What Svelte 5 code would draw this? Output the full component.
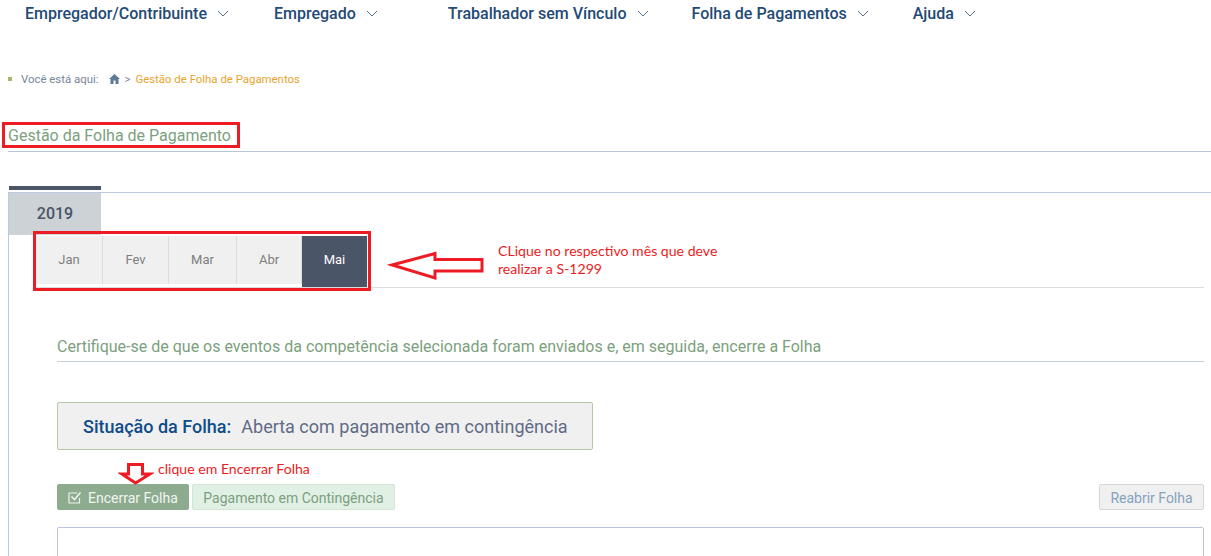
<script>
  const menu = [
    { label: 'Empregador/Contribuinte', gap: 45 },
    { label: 'Empregado', gap: 70 },
    { label: 'Trabalhador sem Vínculo', gap: 43 },
    { label: 'Folha de Pagamentos', gap: 44 },
    { label: 'Ajuda', gap: 0 }
  ];
  const months = ['Jan', 'Fev', 'Mar', 'Abr', 'Mai'];
</script>

<div class="page">
  <nav class="topnav">
    {#each menu as item}
      <a class="nav-item" style="margin-right: {item.gap}px">
        {item.label}
        <svg class="chev" width="12" height="7" viewBox="0 0 12 7"><path d="M1 1l5 5 5-5" fill="none" stroke="#5a6f85" stroke-width="1" /></svg>
      </a>
    {/each}
  </nav>

  <div class="crumbs">
    <span class="bullet"></span>
    <span class="here">Você está aqui:</span>
    <svg class="home" width="11" height="10" viewBox="0 0 11 10"><path d="M5.5 0L0 5h1.5v5h3V6.5h2V10h3V5H11z" fill="#5f7a94" /></svg>
    <span class="sep">&gt;</span>
    <span class="current">Gestão de Folha de Pagamentos</span>
  </div>

  <div class="title-row">
    <h1>Gestão da Folha de Pagamento</h1>
  </div>

  <div class="tab-marker"></div>
  <section class="panel">
    <div class="year">2019</div>
    <div class="months-row">
      <div class="months">
        {#each months as m}
          <button class="month" class:active={m === 'Mai'}>{m}</button>
        {/each}
      </div>
    </div>

    <div class="content">
      <h2>Certifique-se de que os eventos da competência selecionada foram enviados e, em seguida, encerre a Folha</h2>

      <div class="status">
        <strong>Situação da Folha:</strong>
        <span>Aberta com pagamento em contingência</span>
      </div>

      <div class="actions">
        <button class="btn close">
          <svg width="14" height="13" viewBox="0 0 14 13"><path d="M11.500 7v5h-10.500v-10h8.500" fill="none" stroke="#eef3ee" stroke-width="1.2" /><path d="M3.500 5.500l3 3 6-7" fill="none" stroke="#eef3ee" stroke-width="1.6" /></svg>
          Encerrar Folha
        </button>
        <button class="btn contingency">Pagamento em Contingência</button>
        <button class="btn reopen">Reabrir Folha</button>
      </div>

      <div class="box"></div>
    </div>
  </section>

  <!-- anotacoes por cima da tela -->
  <div class="mark month-mark"></div>
  <svg class="arrow left-arrow" width="100" height="32" viewBox="0 0 100 32">
    <path d="M5 15L48 3.500V9.500H95V21H48V28z" fill="#fff" stroke="#ed1c24" stroke-width="3" />
  </svg>
  <p class="note note-month">CLique no respectivo mês que deve<br />realizar a S-1299</p>
  <svg class="arrow down-arrow" width="36" height="23" viewBox="0 0 36 23">
    <path d="M10.500 1.500H24.500V11H32L17.500 20 4 11h6.500z" fill="#fff" stroke="#ed1c24" stroke-width="3" />
  </svg>
  <p class="note note-close">clique em Encerrar Folha</p>
</div>

<style>
  :global(body) {
    margin: 0;
    background: #fff;
    overflow: hidden;
  }

  .page {
    position: relative;
    width: 1211px;
    height: 556px;
    overflow: hidden;
    font-family: Roboto, sans-serif;
  }

  .topnav {
    display: flex;
    align-items: center;
    height: 26px;
    padding-left: 25px;
  }

  .nav-item {
    display: flex;
    align-items: center;
    gap: 10px;
    font-size: 16px;
    font-weight: 500;
    color: #1f4a75;
    white-space: nowrap;
  }

  .chev {
    margin-top: 1px;
  }

  .crumbs {
    display: flex;
    align-items: center;
    height: 14px;
    margin-top: 46px;
    padding-left: 8px;
    font-size: 11.4px;
  }

  .bullet {
    width: 4px;
    height: 4px;
    background: #a3b86c;
    margin-right: 9px;
  }

  .here {
    color: #76869a;
    margin-right: 11px;
  }

  .sep {
    color: #76869a;
    margin: 0 5px 0 4px;
  }

  .current {
    color: #e8a32e;
  }

  .title-row {
    margin-top: 36px;
    margin-left: 8px;
    height: 29px;
    border-bottom: 1px solid #b9c4d8;
  }

  h1 {
    box-sizing: border-box;
    width: 238px;
    height: 26px;
    margin: 0 0 0 -6px;
    padding: 2px 0 0 3px;
    border: 3px solid #ed1c24;
    font-size: 16px;
    line-height: 18px;
    font-weight: 400;
    color: #7c9f7e;
    white-space: nowrap;
  }

  .tab-marker {
    width: 92px;
    height: 4px;
    margin: 34px 0 0 9px;
    background: #4a5568;
  }

  .panel {
    margin: 2px 0 0 8px;
    border-top: 1px solid #b9c9de;
    border-left: 1px solid #b9c9de;
    height: 400px;
  }

  .year {
    width: 92px;
    height: 42px;
    background: #ccd2d5;
    color: #4a5568;
    font-size: 16px;
    font-weight: 500;
    line-height: 42px;
    text-align: center;
  }

  .months-row {
    margin: 1px 7px 0 27px;
    border-bottom: 1px solid #dcdcdc;
  }

  .months {
    display: flex;
    height: 51px;
  }

  .month {
    width: 66px;
    height: 48px;
    padding: 0 0 2px;
    border: 0;
    border-right: 1px solid #dcdcdc;
    background: #f0f0f0;
    color: #7e7e7e;
    font: 400 13px Roboto, sans-serif;
  }

  .month:nth-child(1) {
    width: 67px;
  }

  .month:nth-child(3) {
    width: 68px;
  }

  .month:nth-child(4) {
    width: 65px;
  }

  .month.active {
    width: 65px;
    height: 51px;
    padding-bottom: 5px;
    border: 0;
    background: #4a5568;
    color: #fff;
  }

  .content {
    margin: 0 7px 0 48px;
  }

  h2 {
    margin: 0;
    padding: 49px 0 5px;
    height: 19px;
    line-height: 19px;
    font-size: 16px;
    font-weight: 400;
    color: #7c9f7e;
    border-bottom: 1px solid #c6cfdc;
  }

  .status {
    display: flex;
    align-items: center;
    gap: 10px;
    width: 509px;
    height: 46px;
    margin-top: 40px;
    padding-left: 25px;
    background: #f0f0f0;
    border: 1px solid #b4c8a8;
    border-radius: 2px;
    font-size: 18px;
  }

  .status strong {
    color: #0f4c8a;
    font-weight: 500;
  }

  .status span {
    color: #5f6b85;
  }

  .actions {
    display: flex;
    gap: 3px;
    margin-top: 34px;
  }

  .btn {
    display: flex;
    align-items: center;
    height: 26px;
    padding: 1px 0 0;
    border-radius: 2px;
    font: 400 14px Roboto, sans-serif;
    white-space: nowrap;
  }

  .close {
    width: 132px;
    gap: 6px;
    padding-left: 11px;
    border: 0;
    background: #8dab8f;
    color: #f2f6f2;
  }

  .contingency {
    width: 203px;
    justify-content: center;
    border: 1px solid #d3e6d6;
    background: #e1f0e4;
    color: #7c9f7e;
  }

  .reopen {
    width: 105px;
    justify-content: center;
    margin-left: auto;
    border: 1px solid #d6d6d6;
    background: #f0f0f0;
    color: #85a3bd;
  }

  .box {
    height: 60px;
    margin-top: 17px;
    border: 1px solid #b9c4de;
    border-radius: 2px 2px 0 0;
  }

  .mark {
    position: absolute;
    box-sizing: border-box;
    border: 3px solid #ed1c24;
  }

  .month-mark {
    left: 33px;
    top: 231px;
    width: 338px;
    height: 60px;
  }

  .arrow {
    position: absolute;
  }

  .left-arrow {
    left: 387px;
    top: 250px;
  }

  .down-arrow {
    left: 118px;
    top: 463px;
  }

  .note {
    position: absolute;
    margin: 0;
    font-family: Lato, sans-serif;
    font-size: 14.1px;
    line-height: 18px;
    color: #ed1c24;
    white-space: nowrap;
  }

  .note-month {
    left: 498px;
    top: 242px;
  }

  .note-close {
    left: 158px;
    top: 460px;
  }
</style>
